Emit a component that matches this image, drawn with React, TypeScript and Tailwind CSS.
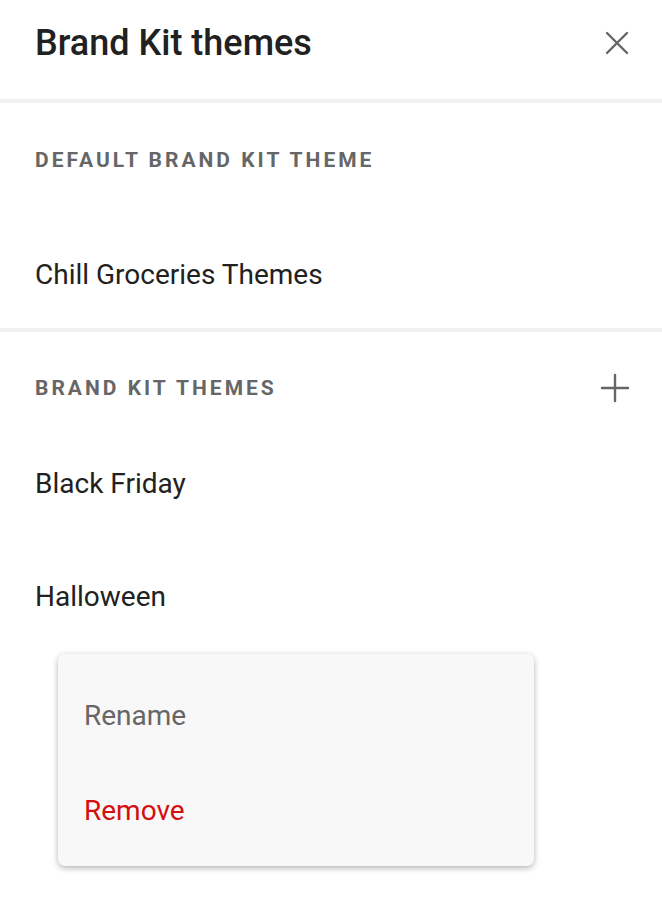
const font = { fontFamily: "Roboto, 'Noto Sans', sans-serif" };

function CloseIcon() {
  return (
    <svg width="28" height="28" viewBox="0 0 28 28" fill="none" stroke="#666" strokeWidth="2.4" strokeLinecap="round">
      <path d="M4 4 L24 24 M24 4 L4 24" />
    </svg>
  );
}

function PlusIcon() {
  return (
    <svg width="30" height="30" viewBox="0 0 30 30" fill="none" stroke="#666" strokeWidth="2.4" strokeLinecap="round">
      <path d="M15 2 V28 M2 15 H28" />
    </svg>
  );
}

export default function App() {
  return (
    <div className="relative w-[662px] h-[902px] bg-white text-[#212121]" style={font}>
      <header className="h-[99px] flex items-start justify-between pl-[35px] pr-[31px] pt-[26px]">
        <h1 className="text-[36px] leading-[34px] font-medium">Brand Kit themes</h1>
        <button className="w-[28px] h-[34px] flex items-center justify-center">
          <CloseIcon />
        </button>
      </header>
      <div className="h-[4px] bg-[#f1f1f1]" />

      <section className="h-[225px] px-[35px] pt-[45px]">
        <h2 className="text-[21px] leading-[24px] font-bold tracking-[3px] text-[#666]">
          DEFAULT BRAND KIT THEME
        </h2>
        <div className="mt-[88px] text-[28px] leading-[30px]">Chill Groceries Themes</div>
      </section>
      <div className="h-[4px] bg-[#f1f1f1]" />

      <section className="px-[35px] pt-[42px]">
        <div className="h-[28px] flex items-center justify-between">
          <h2 className="text-[21px] leading-[24px] font-bold tracking-[3px] text-[#666]">
            BRAND KIT THEMES
          </h2>
          <button className="w-[30px] h-[30px] -mr-[3px] flex items-center justify-center">
            <PlusIcon />
          </button>
        </div>
        <div className="mt-[67px] text-[28px] leading-[30px]">Black Friday</div>
        <div className="mt-[83px] text-[28px] leading-[30px]">Halloween</div>
      </section>

      <div className="absolute left-[58px] top-[654px] w-[476px] h-[212px] rounded-[7px] bg-[#f8f8f8] shadow-[0_2px_6px_rgba(0,0,0,0.3)] px-[26px] pt-[47px]">
        <div className="text-[28px] leading-[30px] text-[#666]">Rename</div>
        <div className="mt-[65px] text-[28px] leading-[30px] text-[#d40f0f]">Remove</div>
      </div>
    </div>
  );
}
